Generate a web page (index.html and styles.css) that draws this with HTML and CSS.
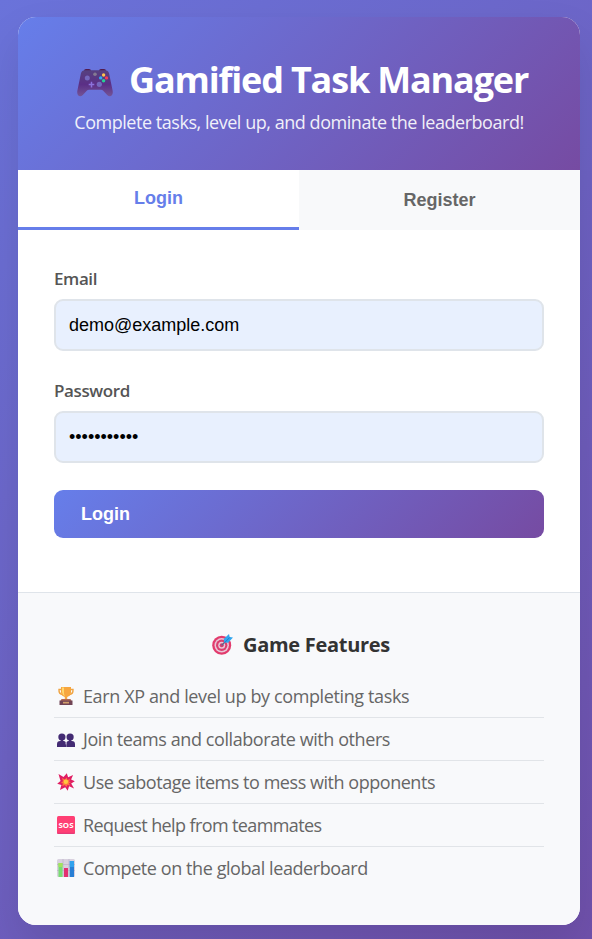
FILE: index.html
```html
<!DOCTYPE html>
<html lang="en">
<head>
  <meta charset="UTF-8">
  <meta name="viewport" content="width=device-width, initial-scale=1.0">
  <title>Gamified Task Manager</title>
  <link rel="stylesheet" href="styles.css">
</head>
<body>
  <div class="auth-container">
    <header class="auth-header">
      <h1>
        <svg class="icon-game" viewBox="0 0 36 28">
          <defs>
            <linearGradient id="pad" x1="0" y1="0" x2="0" y2="1">
              <stop offset="0" stop-color="#56417f"/>
              <stop offset=".55" stop-color="#5b2f86"/>
              <stop offset="1" stop-color="#735496"/>
            </linearGradient>
          </defs>
          <path d="M7 2Q7 0 9 0h3q2 0 2 2zM22 2q0-2 2-2h3q2 0 2 2z" fill="#521b4e"/>
          <path d="M8 1.2h20q3.200 0 4.100 3.300l3.500 17c1 5-2.600 7.300-5.400 4.400l-4.200-4.400q-.8-.8-2-.8H12q-1.200 0-2 .8l-4.200 4.400C3 28.800-.6 26.500.4 21.500l3.500-17Q4.800 1.200 8 1.200z" fill="url(#pad)"/>
          <circle cx="10.300" cy="9" r="2.500" fill="#7468bd"/>
          <circle cx="22.300" cy="15.300" r="2.600" fill="#7468bd"/>
          <circle cx="18" cy="5.200" r="1.800" fill="#847a91"/>
          <path d="M14.500 12.800v5.600M11.700 15.600h5.600" stroke="#8c72dc" stroke-width="1.500"/>
          <circle cx="26.600" cy="6" r="1.700" fill="#ffc34d"/>
          <circle cx="26.600" cy="11.700" r="1.700" fill="#27cf96"/>
          <circle cx="23.700" cy="8.900" r="1.700" fill="#31a9f2"/>
          <circle cx="29.500" cy="8.900" r="1.700" fill="#f13c58"/>
        </svg>
        <span class="title-text">Gamified Task Manager</span>
      </h1>
      <p>Complete tasks, level up, and dominate the leaderboard!</p>
    </header>

    <div class="auth-tabs">
      <button class="tab-btn active">Login</button>
      <button class="tab-btn">Register</button>
    </div>

    <form class="auth-form">
      <div class="form-group">
        <label for="email">Email</label>
        <input type="email" id="email" value="demo@example.com">
      </div>
      <div class="form-group">
        <label for="password">Password</label>
        <input type="password" id="password" value="password123">
      </div>
      <button type="button" class="btn-primary">Login</button>
    </form>

    <section class="features">
      <h3>
        <svg class="icon-target" viewBox="0 0 21 21">
          <circle cx="9.700" cy="11.300" r="9.500" fill="#e23b6d"/>
          <circle cx="9.700" cy="11.300" r="7.200" fill="#e9c6d6"/>
          <circle cx="9.700" cy="11.300" r="5.700" fill="#db3f70"/>
          <circle cx="9.700" cy="11.300" r="3.500" fill="#e9c6d6"/>
          <circle cx="9.700" cy="11.300" r="2" fill="#d23e71"/>
          <path d="M9.700 11.300L15 6" stroke="#5a668b" stroke-width="1.300"/>
          <path d="M11.700 5L17 0l.7 3 3.300.6-4.800 5.200-4-.3z" fill="#31a6ee"/>
          <path d="M13 8.200l4.700-4.700" stroke="#1874c5" stroke-width=".8"/>
        </svg>
        <span>Game Features</span>
      </h3>
      <ul>
        <li>
          <svg class="icon-feature" viewBox="0 0 18 18">
            <path d="M4.500 2.500H2q-.4 4.600 4 5.300M13.500 2.500H16q.4 4.600-4 5.300" fill="none" stroke="#efa443" stroke-width="1.400"/>
            <path d="M4 0h10v5.500Q13.500 9 10.200 10v3H7.800v-3Q4.500 9 4 5.500z" fill="#f7a63f"/>
            <path d="M5 .5h2v5.800q0 1.500 1 2.800-2.600-1-3-4z" fill="#ffd76c"/>
            <path d="M4.500 12h9l1 2H3.500z" fill="#b36a52"/>
            <path d="M2.500 13.500h13V18h-13z" fill="#714455"/>
            <path d="M6 14.800h6v1.700H6z" fill="#d3a06c"/>
          </svg>
          <span class="feature-xp">Earn XP and level up by completing tasks</span>
        </li>
        <li>
          <svg class="icon-feature" viewBox="0 0 18 18">
            <g fill="#432b73">
              <circle cx="4.900" cy="7" r="3.600"/>
              <circle cx="13.100" cy="7" r="3.600"/>
              <path d="M0 17v-2.700Q0 11 3.200 11h3.400Q9 11 9 14.300V17zM9.300 17v-2.700Q9.300 11 11.700 11h3.100q3.200 0 3.200 3.300V17z"/>
              <path d="M3.700 9h2.400v3H3.700zM11.900 9h2.400v3h-2.400z"/>
            </g>
            <path d="M9 12.500v2" stroke="#d6cce8" stroke-width=".8"/>
          </svg>
          <span class="feature-teams">Join teams and collaborate with others</span>
        </li>
        <li>
          <svg class="icon-feature" viewBox="0 0 18 18">
            <path d="M1.500 1l5 3L9.800.3l1.300 4 5-2.300-2 4.600 3.700 1.600-3.600 2.200 2.900 5-5-2.100-1.400 4.400-2.500-3.500L3 17l1.400-4.900L.2 10.800l3.300-2.700z" fill="#e01e62"/>
            <path d="M5 5l2.900 1.500 1.800-2 .8 2.400 2.800-1-1.400 2.500 2 .8-2 1.100 1.400 2.500-2.800-1-1.200 2.200-1.500-2.100-2.700 1.400.9-2.800-2-.8 2-1.400z" fill="#ff7540"/>
            <circle cx="8.900" cy="8.800" r="2.200" fill="#ffc93f"/>
          </svg>
          <span class="feature-sabotage">Use sabotage items to mess with opponents</span>
        </li>
        <li>
          <svg class="icon-feature" viewBox="0 0 18 18">
            <rect width="18" height="18" rx="1.500" fill="#ff3f74"/>
            <path d="M.3 17.300h17.400" stroke="#d5377b" stroke-width=".8"/>
            <text class="sos" x="9" y="11.900" text-anchor="middle" textLength="15" lengthAdjust="spacingAndGlyphs">SOS</text>
          </svg>
          <span class="feature-help">Request help from teammates</span>
        </li>
        <li>
          <svg class="icon-feature" viewBox="0 0 18 18">
            <rect width="18" height="18" rx="1.500" fill="#d8d1df"/>
            <path d="M0 5.500h18M0 11.500h18M6 0v18M12 0v18" stroke="#bbb1c8" stroke-width=".7"/>
            <rect x="1.500" y="4" width="4" height="14" fill="#78dc73"/>
            <rect x="1.500" y="4" width="4" height="4" fill="#a2e35b"/>
            <rect x="7" y="9" width="4" height="9" fill="#e32f70"/>
            <rect x="12.800" y="2" width="4.200" height="16" fill="#287fd5"/>
            <rect x="12.800" y="2" width="4.200" height="6" fill="#31a2ed"/>
          </svg>
          <span class="feature-board">Compete on the global leaderboard</span>
        </li>
      </ul>
    </section>
  </div>
</body>
</html>
```

FILE: styles.css
```css
* {
  margin: 0;
  padding: 0;
  box-sizing: border-box;
}
body {
  font-family: 'Segoe UI', 'Open Sans', 'Noto Sans', sans-serif;
  background: linear-gradient(135deg, #6a73da 0%, #7051ac 100%);
  height: 939px;
  padding: 17px 12px 14px 18px;
  overflow: hidden;
}
.auth-container {
  height: 908px;
  background: white;
  border-radius: 18px;
  overflow: hidden;
  box-shadow: 0 22px 45px rgba(0, 0, 0, 0.1);
}
.auth-header {
  height: 153px;
  padding-top: 37px;
  background: linear-gradient(135deg, #667eea 0%, #764ba2 100%);
  color: white;
  text-align: center;
}
h1 {
  display: flex;
  align-items: center;
  padding-left: 59px;
  height: 50px;
  font-size: 36px;
  font-weight: 700;
  white-space: nowrap;
}
.icon-game {
  width: 36px;
  height: 28px;
  margin: 8px 16px 0 0;
}
.title-text {
  letter-spacing: -1.17px;
}
.auth-header p {
  font-size: 18px;
  line-height: 24px;
  margin-top: 6px;
  letter-spacing: -0.46px;
  white-space: nowrap;
  opacity: 0.9;
}
.auth-tabs {
  display: flex;
  height: 60px;
  background: #f8f9fa;
}
.tab-btn {
  flex: 1;
  border: none;
  background: #f8f9fa;
  color: #666;
  font: bold 18px 'Liberation Sans', Arial, sans-serif;
  cursor: pointer;
}
.tab-btn.active {
  background: white;
  color: #667eea;
  border-bottom: 3px solid #667eea;
}
.auth-form {
  height: 362px;
  padding: 37px 36px 36px;
}
.form-group {
  margin-bottom: 28px;
}
label {
  display: block;
  font-size: 17px;
  font-weight: 600;
  line-height: 24px;
  margin-bottom: 8px;
  color: #555;
  letter-spacing: -0.4px;
}
.form-group input {
  display: block;
  width: 100%;
  height: 52px;
  padding: 0 13px;
  border: 2px solid #dfe4ea;
  border-radius: 9px;
  background: #e8f0fe;
  color: #000;
  font: 18px 'Liberation Sans', Arial, sans-serif;
}
.btn-primary {
  display: block;
  width: 100%;
  height: 48px;
  margin-top: -1px;
  padding: 0 27px;
  border: none;
  border-radius: 9px;
  background: linear-gradient(135deg, #667eea 0%, #764ba2 100%);
  color: white;
  font: bold 18px 'Liberation Sans', Arial, sans-serif;
  text-align: left;
  cursor: pointer;
}
.features {
  height: 333px;
  padding: 36px;
  background: #f8f9fb;
  border-top: 1px solid #dfe4ea;
}
.features h3 {
  display: flex;
  align-items: center;
  justify-content: center;
  height: 31px;
  margin-bottom: 15px;
  padding-left: 4px;
  color: #333;
  font-size: 20px;
  letter-spacing: -0.3px;
}
.icon-target {
  width: 21px;
  height: 21px;
  margin-right: 10px;
}
.features ul {
  list-style: none;
}
.features li {
  display: flex;
  align-items: center;
  height: 43px;
  padding-left: 3px;
  border-bottom: 1px solid #e1e4e8;
  color: #666;
  font-size: 18px;
  white-space: nowrap;
}
.features li:last-child {
  border-bottom-color: transparent;
}
.icon-feature {
  width: 18px;
  height: 18px;
  margin-right: 8px;
}
.feature-xp {
  letter-spacing: -0.38px;
}
.feature-teams {
  letter-spacing: -0.42px;
}
.feature-sabotage {
  letter-spacing: -0.46px;
}
.feature-help {
  letter-spacing: -0.61px;
}
.feature-board {
  letter-spacing: -0.42px;
}
.sos {
  font: bold 7.5px 'Open Sans', sans-serif;
  fill: white;
}
```
